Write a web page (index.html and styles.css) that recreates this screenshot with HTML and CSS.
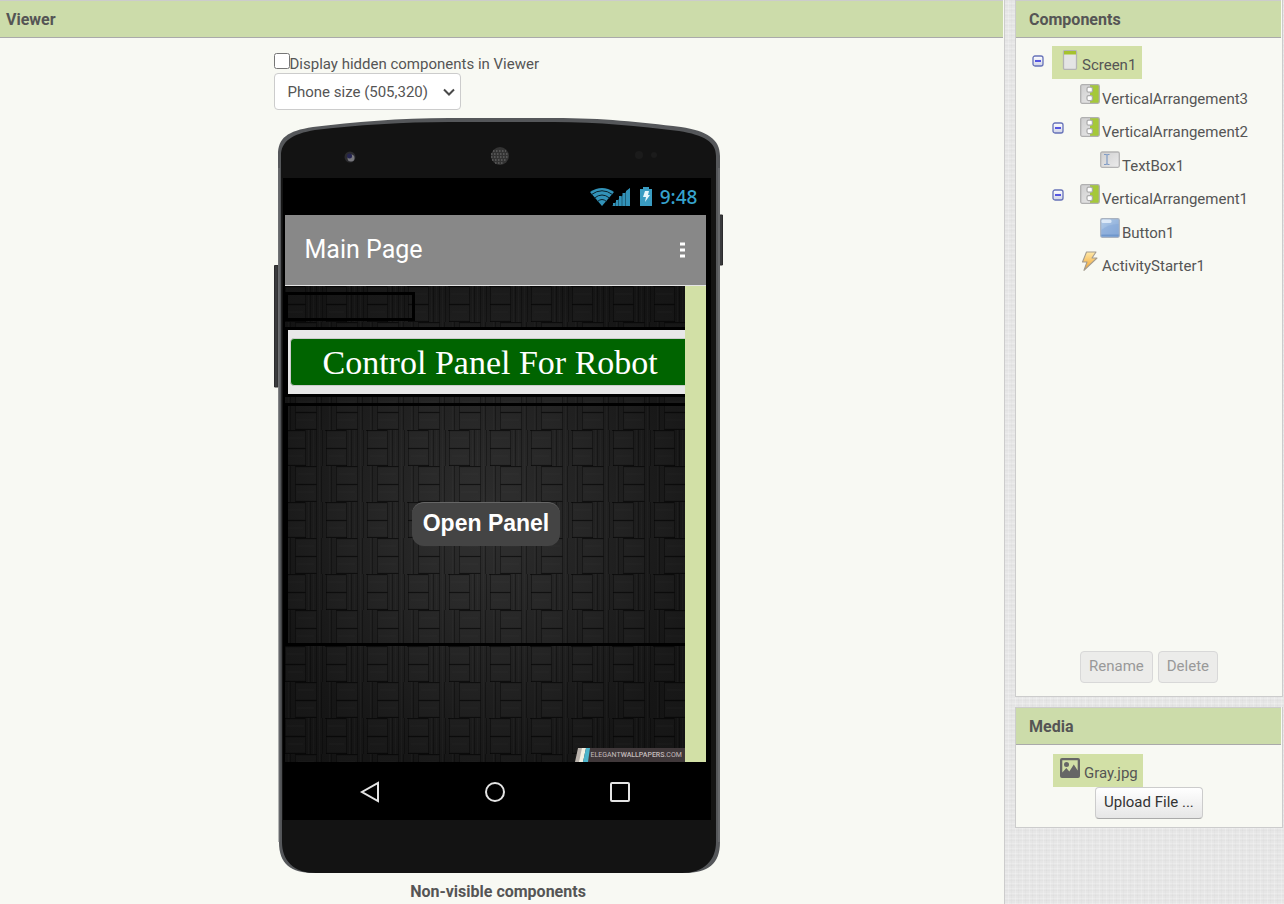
FILE: index.html
```html
<!DOCTYPE html>
<html lang="en">
<head>
<meta charset="utf-8">
<title>Designer</title>
<link rel="stylesheet" href="styles.css">
</head>
<body>
<svg class="defs" aria-hidden="true">
  <defs>
    <linearGradient id="silver" x1="0" y1="0" x2="1" y2="1"><stop offset="0" stop-color="#cfcfcf"/><stop offset="1" stop-color="#ececec"/></linearGradient>
    <linearGradient id="blue" x1="0" y1="0" x2="1" y2="1"><stop offset="0" stop-color="#b4cdea"/><stop offset="1" stop-color="#7fa3d3"/></linearGradient>
    <linearGradient id="gold" x1="0" y1="0" x2="0" y2="1"><stop offset="0" stop-color="#ffe9a8"/><stop offset="1" stop-color="#f0a02c"/></linearGradient>
    <linearGradient id="box" x1="0" y1="0" x2="0" y2="1"><stop offset="0" stop-color="#fff"/><stop offset="1" stop-color="#cfd3e6"/></linearGradient>
    <symbol id="minus" viewBox="0 0 12 12"><rect x="1" y="1" width="10" height="10" rx="2" fill="url(#box)" stroke="#6672b8" stroke-width="1.3"/><path d="M3 6h6" stroke="#1818d8" stroke-width="1.4"/></symbol>
    <symbol id="vertical" viewBox="0 0 20 20"><rect x=".7" y=".7" width="18.6" height="18.6" rx="1.5" fill="url(#silver)"/><path d="M10 1h9v18h-9z" fill="#a5c83a"/><rect x=".7" y=".7" width="18.6" height="18.6" rx="1.5" fill="none" stroke="#b0b0b0" stroke-width="1.3"/><rect x="7" y="3.2" width="5.4" height="5" rx="1.5" fill="#fff" stroke="#aaa" stroke-width="1.2"/><rect x="7" y="11.6" width="5.4" height="5" rx="1.5" fill="#fff" stroke="#aaa" stroke-width="1.2"/></symbol>
  </defs>
</svg>
<div class="designer">
  <main class="viewer">
    <h2 class="panel-title viewer-title">Viewer</h2>
    <div class="stage">
    <div class="workspace">
      <div class="options">
        <label class="check"><input type="checkbox">Display hidden components in Viewer</label>
        <div class="size-picker">
          <select aria-label="Screen size"><option>Phone size (505,320)</option></select>
          <svg class="chevron" viewBox="0 0 12 8" aria-hidden="true"><path d="M1 1.5l5 5 5-5" fill="none" stroke="#4a4a4a" stroke-width="2"/></svg>
        </div>
      </div>
      <div class="phone">
        <svg class="phone-frame" viewBox="0 0 449 755" preserveAspectRatio="none" aria-hidden="true">
          <path d="M.5 147.500H4V269H.5z" fill="#3a3b3d" stroke="#2c2c2d"/>
          <path d="M445 97h3.500v50H445z" fill="#3a3b3d" stroke="#2c2c2d"/>
          <path d="M4 37C4 20 13 13 39 9C80 4 125 0 175 0H280C330 0 365 4 407 9C433 13 446 21 446 38V724C446 746 434 755 410 755H40C17 755 5 746 5 724Z" fill="#55575a"/>
          <path d="M7 38C7 23 18 16 41 12C82 7 130 4 175 4H280C325 4 364 8 405 13C430 17 442 24 442 38V724C442 742 430 755 408 755H42C19 755 8 742 8 724Z" fill="#131313"/>
          <path d="M5 50V724M445 50V724" stroke="#77797b" fill="none"/>
          <circle cx="76" cy="39" r="5.5" fill="#2b2b2f"/><circle cx="77" cy="40" r="3.5" fill="#77777c"/><circle cx="75.500" cy="38" r="2.5" fill="#242450"/>
          <circle cx="226" cy="38" r="9" fill="#333"/>
          <path d="M219 33h13M217 36h17M217 39h17M218 42h15M221 45h9" stroke="#777" stroke-dasharray="1.500 1.500"/>
          <circle cx="365" cy="37" r="4" fill="#1b1b1b"/><circle cx="380" cy="37" r="3" fill="#1b1b1b"/>
        </svg>
        <div class="screen">
          <div class="status">
            <svg class="status-icons" viewBox="0 0 64 22" aria-hidden="true">
              <path d="M0 6Q12-2 24 6L12 20Z" fill="#3292b8"/>
              <path d="M1.500 8.500Q12 1 22.500 8.500M4.500 12Q12 6 19.500 12M7.500 15.500Q12 11.500 16.500 15.500" fill="none" stroke="#08202a" stroke-width="1"/>
              <path d="M22 20L40 2V20Z" fill="#1f5f78"/>
              <path d="M23 20h2v-3h-2zM26 20h2v-6h-2zM29 20h2.500v-10h-2.500zM32.500 20h2.500v-13h-2.500zM36 20h4v-18l-4 3z" fill="#3292b8"/>
              <path d="M50 3h3V1h6v2h3v17H50z" fill="#3a9cc2"/>
              <path d="M55 5h4l-1 4h2l-5 7 1-5h-3z" fill="#e8f6fb"/>
            </svg>
            <span class="clock">9:48</span>
          </div>
          <div class="app">
            <div class="app-title"><span>Main Page</span>
              <svg class="dots" viewBox="0 0 5 16" aria-hidden="true"><path d="M0 .5h5v3H0zM0 6.500h5v3H0zM0 12.500h5v3H0z" fill="#fff"/></svg>
            </div>
            <div class="app-body">
              <div class="canvas">
                <svg class="weave" aria-hidden="true">
                  <defs>
                    <pattern id="basket" width="41" height="72" patternUnits="userSpaceOnUse">
                      <g fill="none" stroke="#000">
                        <path d="M0 .5h20M41 .5h-1M0 18.500h20.500M0 35.500h21M10.500 36.500h21M10.500 54.500h21M10.500 71.500h21" stroke-opacity=".55"/>
                        <path d="M.5 0v36M20.500 0v36M25.500 0v36M31.500 0v72M37.500 0v36M10.500 36v36M5.500 36v36M36.500 36v36" stroke-opacity=".32"/>
                      </g>
                      <path d="M1 2h19v15H1zM1 20h19v14H1zM11 38h20v15H11zM11 56h20v14H11z" fill="#fff" fill-opacity=".012"/>
                      <path d="M2 8h17M3 26h15M13 44h16M12 62h17M23.500 0v36M28.500 0v36M34.500 0v72M3.500 36v36" stroke="#fff" stroke-opacity=".02"/>
                    </pattern>
                  </defs>
                  <rect width="100%" height="100%" fill="url(#basket)"/>
                </svg>
                <div class="arr arr-empty"></div>
                <div class="arr arr-text"><input type="text" value="Control Panel For Robot" aria-label="TextBox1"></div>
                <div class="arr arr-button"><button type="button">Open Panel</button></div>
                <div class="credit">
                  <svg viewBox="0 0 16 14" aria-hidden="true"><path d="M3 0h5L5 14H0z" fill="#b9b2ac"/><path d="M7 0h4L8 14H4z" fill="#f3f1e2"/><path d="M11 0h4l-2 14H8z" fill="#4cb5cb"/></svg>
                  <span>ELEGANT<b>WALLPAPERS</b>.COM</span>
                </div>
              </div>
            </div>
          </div>
          <div class="nav">
            <svg viewBox="0 0 24 24" aria-hidden="true"><path d="M20 3v18L4 12z" fill="none" stroke="#e4e4e4" stroke-width="2"/></svg>
            <svg viewBox="0 0 24 24" aria-hidden="true"><circle cx="12" cy="12" r="9" fill="none" stroke="#e4e4e4" stroke-width="2"/></svg>
            <svg viewBox="0 0 24 24" aria-hidden="true"><rect x="3" y="3" width="18" height="18" rx="1" fill="none" stroke="#e4e4e4" stroke-width="2"/></svg>
          </div>
        </div>
      </div>
      <div class="nonvisible">Non-visible components</div>
    </div>
    </div>
  </main>
  <aside class="side">
    <section class="panel">
      <h2 class="panel-title">Components</h2>
      <ul class="tree">
        <li>
          <div class="row"><button class="toggle" type="button" aria-label="Collapse Screen1"><svg viewBox="0 0 12 12"><use href="#minus"/></svg></button>
            <span class="item selected"><svg viewBox="0 0 20 20"><rect x="3.500" y=".7" width="13" height="18.600" rx="1" fill="#e4e4e4" stroke="#b4b4b4" stroke-width="1.300"/><path d="M4 1h12v3.500H4z" fill="#a5c22e"/></svg><span>Screen1</span></span></div>
          <ul>
            <li><div class="row leaf"><span class="item"><svg><use href="#vertical"/></svg><span>VerticalArrangement3</span></span></div></li>
            <li>
              <div class="row"><button class="toggle" type="button" aria-label="Collapse VerticalArrangement2"><svg viewBox="0 0 12 12"><use href="#minus"/></svg></button><span class="item"><svg><use href="#vertical"/></svg><span>VerticalArrangement2</span></span></div>
              <ul><li><div class="row leaf"><span class="item"><svg viewBox="0 0 20 20"><rect x=".7" y="1" width="18.600" height="15.300" rx="1.500" fill="url(#silver)" stroke="#b4b4b4" stroke-width="1.300"/><path d="M4 3.500h2l1 .7 1-.7h1.500M7 4v9M4 13.500h2l1-.7 1 .7h1.500" fill="none" stroke="#7f9bc4" stroke-width="1.200"/></svg><span>TextBox1</span></span></div></li></ul>
            </li>
            <li>
              <div class="row"><button class="toggle" type="button" aria-label="Collapse VerticalArrangement1"><svg viewBox="0 0 12 12"><use href="#minus"/></svg></button><span class="item"><svg><use href="#vertical"/></svg><span>VerticalArrangement1</span></span></div>
              <ul><li><div class="row leaf"><span class="item"><svg viewBox="0 0 20 20"><rect x=".7" y=".7" width="18.600" height="18.600" rx="1.500" fill="url(#blue)" stroke="#a9b2bf" stroke-width="1.200"/><path d="M1.300 12Q8 6 18.700 6V16.500H1.300z" fill="#86a9d8" fill-opacity=".55"/><path d="M1.300 16.500h17.400v2H1.300z" fill="#6f97cc"/><rect x="1.500" y="1.500" width="10" height="3.500" rx="1.500" fill="#e8f1fb" fill-opacity=".8"/></svg><span>Button1</span></span></div></li></ul>
            </li>
            <li><div class="row leaf"><span class="item"><svg viewBox="0 0 20 20"><path d="M6.500 1h9.500l-4 6h5L4 19.300l3-8.300H2.500z" fill="url(#gold)" stroke="#a49c90" stroke-width="1.100" stroke-linejoin="round"/></svg><span>ActivityStarter1</span></span></div></li>
          </ul>
        </li>
      </ul>
      <div class="actions"><button class="btn" type="button" disabled>Rename</button><button class="btn" type="button" disabled>Delete</button></div>
    </section>
    <section class="panel">
      <h2 class="panel-title">Media</h2>
      <div class="media">
        <span class="item selected file"><svg viewBox="0 0 20 20"><path fill="#666" fill-rule="evenodd" d="M2 0h16q2 0 2 2v16q0 2-2 2H2q-2 0-2-2V2q0-2 2-2zM2.300 2.300v12.200l4-4.500 3 3.500 4.500-7 3.900 6V2.300z"/><circle cx="6.500" cy="6.500" r="2.500" fill="#666"/></svg><span>Gray.jpg</span></span>
        <button class="btn upload" type="button">Upload File ...</button>
      </div>
    </section>
  </aside>
</div>
</body>
</html>
```

FILE: styles.css
```css
* { box-sizing: border-box; }
body {
  margin: 0;
  font: 15px/18px Roboto, sans-serif;
  color: #555;
  background-color: #e6e6e6;
  background-image:
    repeating-linear-gradient(90deg, rgba(255,255,255,.2) 0 1px, transparent 1px 3px, rgba(0,0,0,.015) 3px 4px, transparent 4px 7px),
    repeating-linear-gradient(0deg, rgba(255,255,255,.2) 0 1px, transparent 1px 3px, rgba(0,0,0,.015) 3px 4px, transparent 4px 5px);
}
.defs { position: absolute; width: 0; height: 0; }
button, input, select { font: inherit; color: inherit; }
ul { margin: 0; padding: 0; list-style: none; }

.designer { display: flex; gap: 10px; min-height: 100vh; padding-right: 1px; }
.viewer { flex: 1; background: #f8f9f3; border-right: 1px solid #ccc; }
.panel-title {
  height: 38px;
  margin: 0 1px 0 0;
  padding: 0 13px;
  font-size: 16px;
  font-weight: 700;
  line-height: 37px;
  background: #ccdcaa;
  border-top: 1px solid #ccc;
  border-bottom: 1px solid #aaa;
}
.viewer-title { padding: 0 6px; }

.stage { padding: 15px 8px 0 0; }
.workspace { width: 449px; margin: 0 auto; }
.check { display: flex; height: 20px; line-height: 22px; }
.check input { width: 16px; height: 16px; margin: 0; }
.size-picker { position: relative; width: 187px; margin-bottom: 8px; }
.size-picker select {
  display: block;
  width: 100%;
  height: 37px;
  padding: 0 13px;
  appearance: none;
  background: #fff;
  border: 1px solid #ccc;
  border-radius: 4px;
}
.chevron { position: absolute; right: 6px; top: 15px; width: 12px; height: 8px; pointer-events: none; }

.phone { position: relative; padding: 60px 12px 53px 9px; }
.phone-frame { position: absolute; inset: 0; width: 100%; height: 100%; }
.screen { position: relative; background: #000; padding: 0 5px 0 2px; }
.status { display: flex; justify-content: flex-end; align-items: center; height: 37px; gap: 6px; padding-right: 8px; }
.status-icons { width: 64px; height: 22px; }
.clock { font: 500 19px/24px "Noto Sans", sans-serif; color: #36a3cd; }
.app-title {
  display: flex;
  justify-content: space-between;
  align-items: center;
  height: 71px;
  padding: 0 21px 0 20px;
  font-size: 25px;
  color: #fff;
  background: #888;
  border-bottom: 1px solid #e4e4e4;
}
.dots { width: 5px; height: 16px; }
.app-body { background: #d2e0a6; padding-right: 21px; }
.canvas {
  position: relative;
  height: 476px;
  padding-top: 6px;
  overflow: hidden;
  background: radial-gradient(ellipse at 50% 50%, #2e2e2e 0, #222 40%, #161616 75%, #121212 100%);
}
.weave { position: absolute; inset: 0; width: 100%; height: 100%; }
.arr { position: relative; margin-bottom: 6px; border: 3px solid #000; }
.arr-empty { width: 130px; height: 29px; }
.arr-text { width: 420px; height: 70px; padding: 8px 2px; background: #e8e8e8; }
.arr-text input {
  width: 408px;
  height: 48px;
  padding: 2px 32px 0;
  font: 34px/44px "Liberation Serif", serif;
  color: #fff;
  background: #006400;
  border: 1px solid #ccc;
  border-radius: 4px;
}
.arr-button { display: flex; align-items: center; justify-content: center; width: 406px; height: 243px; padding: 0 3px 2px 0; }
.arr-button button {
  height: 44px;
  padding: 0 11px 2px;
  font: bold 23px "Liberation Sans", sans-serif;
  color: #fff;
  background: #444;
  border: 0;
  border-top: 1px solid #666;
  border-radius: 12px;
}
.credit { position: absolute; right: 0; bottom: 0; display: flex; width: 110px; height: 14px; background: linear-gradient(90deg, transparent 8px, #40383a 8px); }
.credit svg { width: 16px; height: 14px; }
.credit span { font-size: 7px; line-height: 14px; color: #c4bcbc; white-space: nowrap; }
.credit b { font-weight: 500; }
.nav { display: flex; justify-content: center; gap: 101px; align-items: center; height: 58px; padding: 2px 0 0; }
.nav svg { width: 24px; height: 24px; }
.nonvisible { padding-top: 10px; text-align: center; font-size: 16px; font-weight: 700; }

.side { display: flex; flex-direction: column; gap: 10px; width: 268px; }
.panel { background: #f8f9f3; border: 1px solid #ccc; border-top: 0; }
.tree { min-height: 613px; padding: 8px 0 0 16px; }
.tree ul { padding-left: 20px; }
.row { display: flex; height: 34px; }
.leaf { height: 33px; padding-left: 20px; }
.toggle { width: 20px; height: 33px; padding: 9px 8px 12px 0; background: none; border: 0; }
.toggle svg { display: block; width: 12px; height: 12px; }
.item { display: flex; gap: 2px; height: 33px; padding: 4px 6px 0 8px; }
.item svg { width: 20px; height: 20px; }
.item span { padding-top: 6px; }
.selected { background: #d2e0a6; }
.actions { display: flex; gap: 5px; padding: 0 0 13px 64px; }
.btn {
  height: 32px;
  padding: 0 8px 2px;
  color: #333;
  background: linear-gradient(#fff, #e6e6e6);
  border: 1px solid #ccc;
  border-bottom-color: #aaa;
  border-radius: 4px;
}
.btn:disabled { color: #999; background: #ececea; border-color: #d8d8d8; }
.media { display: flex; flex-direction: column; align-items: flex-start; padding: 9px 0 8px 37px; }
.file { padding: 4px 5px 0 7px; gap: 4px; }
.upload { margin-left: 42px; }
```
